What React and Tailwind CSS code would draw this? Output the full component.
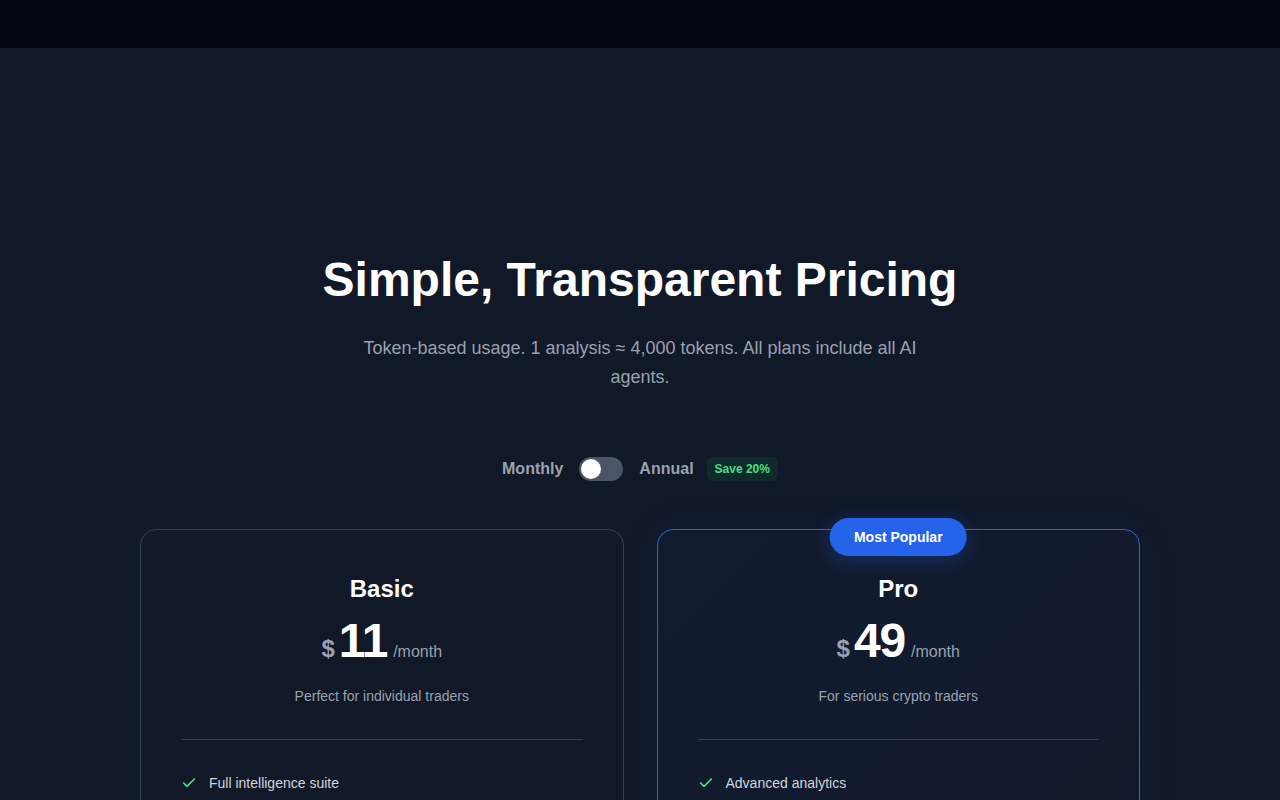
import { Check } from 'lucide-react';

const plans = [
  {
    name: 'Basic',
    price: '11',
    description: 'Perfect for individual traders',
    features: ['Full intelligence suite', '500,000 tokens / month', 'Email support', 'Real-time market data'],
    popular: false,
  },
  {
    name: 'Pro',
    price: '49',
    description: 'For serious crypto traders',
    features: ['Advanced analytics', '2,500,000 tokens / month', 'Priority support', 'Custom alerts'],
    popular: true,
  },
];

const PlanCard = ({ plan }) => (
  <div
    className={
      plan.popular
        ? 'relative rounded-2xl border border-[#2f62e0] bg-gradient-to-br from-[#121b30] to-[#111827] px-10 pt-[43px] pb-10 shadow-[0_0_40px_rgba(37,99,235,0.08)]'
        : 'relative rounded-2xl border border-gray-700 bg-[#111827] px-10 pt-[43px] pb-10'
    }
  >
    {plan.popular && (
      <div className="absolute -top-3 left-1/2 -translate-x-1/2 rounded-full bg-[#2563eb] px-6 py-[9px] text-sm font-bold leading-5 text-white shadow-[0_4px_20px_rgba(37,99,235,0.3)]">
        Most Popular
      </div>
    )}
    <div className="text-center">
      <h3 className="text-2xl font-bold text-white">{plan.name}</h3>
      <div className="mt-3 flex items-baseline justify-center">
        <span className="mr-1 text-2xl font-semibold text-gray-400">$</span>
        <span className="text-5xl font-bold leading-none tracking-tight text-white">{plan.price}</span>
        <span className="ml-[6px] text-base text-gray-400">/month</span>
      </div>
      <p className="mt-[21px] text-sm text-gray-400">{plan.description}</p>
    </div>
    <div className="mt-[33px] h-px bg-gray-700" />
    <ul className="mt-[33px] space-y-4">
      {plan.features.map((feature) => (
        <li key={feature} className="flex items-center text-sm text-gray-300">
          <Check className="mr-3 h-4 w-4 text-[#4ade80]" strokeWidth={2.5} />
          {feature}
        </li>
      ))}
    </ul>
    <button
      className={
        plan.popular
          ? 'mt-10 w-full rounded-lg bg-[#2563eb] py-3 text-sm font-semibold text-white'
          : 'mt-10 w-full rounded-lg border border-gray-600 py-3 text-sm font-semibold text-white'
      }
    >
      Get Started
    </button>
  </div>
);

const App = () => {
  return (
    <div className="min-h-screen bg-[#111827] font-['Liberation_Sans',Arial,sans-serif]">
      <header className="h-[49px] border-b border-gray-800/60 bg-[#030712]" />

      <section className="px-4 pt-[207px] pb-24">
        <div className="mx-auto max-w-5xl">
          <div className="text-center">
            <h1 className="text-5xl font-bold leading-none text-white">Simple, Transparent Pricing</h1>
            <p className="mx-auto mt-[30px] max-w-xl text-lg leading-[29px] text-gray-400">
              Token-based usage. 1 analysis ≈ 4,000 tokens. All plans include all AI agents.
            </p>
          </div>

          <div className="mt-[65px] flex items-center justify-center">
            <span className="font-semibold text-gray-400">Monthly</span>
            <button className="mx-4 flex h-6 w-11 items-center rounded-full bg-gray-600 px-0.5">
              <span className="h-5 w-5 rounded-full bg-white" />
            </button>
            <span className="font-semibold text-gray-400">Annual</span>
            <span className="ml-[13px] rounded-md bg-green-500/10 px-2 py-1 text-xs font-semibold text-[#4ade80]">
              Save 20%
            </span>
          </div>

          <div className="mx-auto mt-12 grid w-[1000px] grid-cols-2 gap-[33px]">
            {plans.map((plan) => (
              <PlanCard key={plan.name} plan={plan} />
            ))}
          </div>
        </div>
      </section>
    </div>
  );
};

export default App;
